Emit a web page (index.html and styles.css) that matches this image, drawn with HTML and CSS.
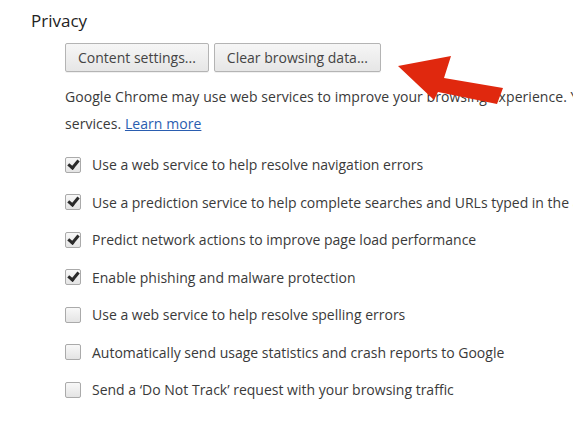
FILE: index.html
```html
<!DOCTYPE html>
<html>
<head>
  <title>Settings - Privacy</title>
  <link rel="stylesheet" href="styles.css">
</head>
<body>

<div class="section">
  <h3>Privacy</h3>

  <div class="content">
    <div class="buttons">
      <button>Content settings...</button>
      <button>Clear browsing data...</button>
    </div>

    <p class="note">
      Google Chrome may use web services to improve your browsing experience. You may optionally disable these<br>
      services. <a href="#">Learn more</a>
    </p>

    <div class="options">
      <!-- checkbox rows -->
      <label class="option"><span class="box checked"></span>Use a web service to help resolve navigation errors</label>
      <label class="option"><span class="box checked"></span>Use a prediction service to help complete searches and URLs typed in the address bar</label>
      <label class="option"><span class="box checked"></span>Predict network actions to improve page load performance</label>
      <label class="option"><span class="box checked"></span>Enable phishing and malware protection</label>
      <label class="option"><span class="box"></span>Use a web service to help resolve spelling errors</label>
      <label class="option"><span class="box"></span>Automatically send usage statistics and crash reports to Google</label>
      <label class="option"><span class="box"></span>Send a &lsquo;Do Not Track&rsquo; request with your browsing traffic</label>
    </div>
  </div>
</div>

<!-- red arrow pointing at the button -->
<svg class="arrow" width="573" height="425" viewBox="0 0 573 425">
  <polygon points="398,66 451,56 444,78 503,88 497,104 438,92 434,100" fill="#e0280e"/>
</svg>

</body>
</html>
```

FILE: styles.css
```css
body {
  margin: 0;
  font-family: "Open Sans", sans-serif;
  color: #3a3a3a;
  background: white;
  overflow: hidden;
}

.section {
  padding: 9px 0 0 31px;
}

h3 {
  margin: 0;
  font-size: 17px;
  font-weight: normal;
  line-height: 24px;
  color: #222;
}

.content {
  padding-left: 34px;
}

.buttons {
  display: flex;
  gap: 5px;
  margin-top: 10px;
}

button {
  height: 29px;
  padding: 0 12px;
  font-family: inherit;
  font-size: 14px;
  color: #444;
  background: linear-gradient(#f6f6f6, #e6e6e6);
  border: 1px solid #b4b4b4;
  border-radius: 2px;
  box-shadow: 0 1px 0 rgba(0, 0, 0, 0.06);
}

.note {
  margin: 11px 0 0;
  font-size: 14px;
  letter-spacing: 0.06px;
  line-height: 27px;
  white-space: nowrap;
}

.note a {
  color: #2a5db0;
}

.options {
  margin-top: 9px;
}

.option {
  display: flex;
  align-items: center;
  height: 37.5px;
  font-size: 14px;
  white-space: nowrap;
}

.box {
  width: 14px;
  height: 14px;
  margin-right: 11px;
  border: 1px solid #aaa;
  border-radius: 2px;
  background: linear-gradient(#f8f8f8, #e4e4e4);
  flex-shrink: 0;
  position: relative;
}

.box.checked::after {
  content: "";
  position: absolute;
  left: 4px;
  top: 0px;
  width: 4px;
  height: 8px;
  border: solid #2a2a2a;
  border-width: 0 3px 3px 0;
  transform: rotate(40deg);
}

.arrow {
  position: absolute;
  left: 0;
  top: 0;
  pointer-events: none;
}
```
